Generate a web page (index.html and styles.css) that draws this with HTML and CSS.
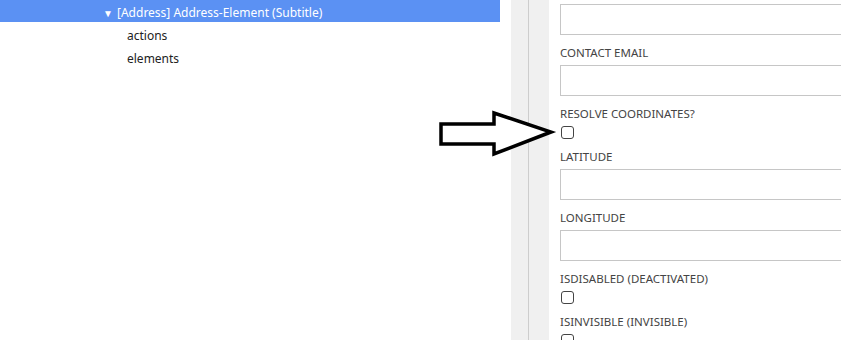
FILE: index.html
```html
<!DOCTYPE html>
<html lang="en">
<head>
  <meta charset="UTF-8">
  <title>Element Editor</title>
  <link rel="stylesheet" href="styles.css">
</head>
<body>

<div class="layout">
  <!-- Tree -->
  <div class="tree">
    <div class="tree-row selected">
      <span class="caret">&#9660;</span>
      <span>[Address] Address-Element (Subtitle)</span>
    </div>
    <div class="tree-row child">actions</div>
    <div class="tree-row child">elements</div>
  </div>

  <!-- Splitter -->
  <div class="splitter">
    <div class="splitter-left"></div>
    <div class="splitter-right"></div>
  </div>

  <!-- Properties -->
  <div class="props">
    <div class="field first">
      <input type="text" class="text-input">
    </div>
    <div class="field">
      <label>Contact Email</label>
      <input type="text" class="text-input">
    </div>
    <div class="field">
      <label>Resolve Coordinates?</label>
      <input type="checkbox" class="check">
    </div>
    <div class="field">
      <label>Latitude</label>
      <input type="text" class="text-input">
    </div>
    <div class="field">
      <label>Longitude</label>
      <input type="text" class="text-input">
    </div>
    <div class="field">
      <label>IsDisabled (Deactivated)</label>
      <input type="checkbox" class="check">
    </div>
    <div class="field">
      <label>IsInvisible (Invisible)</label>
      <input type="checkbox" class="check">
    </div>
  </div>
</div>

<!-- annotation arrow -->
<svg class="arrow" width="130" height="60" viewBox="0 0 130 60">
  <polygon points="11,24 64,24 64,13 121,32 64,54 64,44 11,44" fill="#fff" stroke="#000" stroke-width="3.5" stroke-linejoin="miter"/>
</svg>

</body>
</html>
```

FILE: styles.css
```css
/* Global Styles */
body {
  margin: 0;
  font-family: 'Noto Sans', 'Open Sans', sans-serif;
  background: #fff;
  overflow: hidden;
  height: 340px;
}

.layout {
  display: flex;
  height: 340px;
}

/* Tree */
.tree {
  width: 511px;
  flex-shrink: 0;
  margin-top: -1px;
}

.tree-row {
  height: 23px;
  box-sizing: border-box;
  padding-top: 4px;
  display: flex;
  align-items: center;
  font-size: 12px;
  color: #222;
}

.tree-row.selected {
  width: 500px;
  background: #5b91f3;
  color: #fff;
  padding-left: 103px;
}

.caret {
  font-size: 10px;
  width: 14px;
}

.tree-row.child {
  padding-left: 127px;
}

/* Splitter */
.splitter {
  display: flex;
  flex-shrink: 0;
}

.splitter-left {
  width: 17px;
  background: #f0f0f0;
  border-right: 1px solid #cdcdcd;
}

.splitter-right {
  width: 20px;
  background: #f0f0f0;
}

/* Properties */
.props {
  padding-left: 11px;
  flex: 1;
  min-width: 0;
}

.field {
  display: flex;
  flex-direction: column;
  align-items: flex-start;
  margin-bottom: 10px;
}

.field.first {
  margin-top: 4px;
}

.field label {
  font-size: 11.5px;
  line-height: 16px;
  text-transform: uppercase;
  color: #444;
  margin-bottom: 4px;
}

.text-input {
  width: 320px;
  height: 31px;
  box-sizing: border-box;
  border: 1px solid #c6c6c6;
  margin: 0;
  padding: 0 6px;
}

.check {
  appearance: none;
  width: 13px;
  height: 13px;
  margin: 0 0 0 1px;
  border: 1px solid #444;
  border-radius: 3px;
  background: #fff;
  box-sizing: border-box;
}

.arrow {
  position: absolute;
  left: 430px;
  top: 100px;
}
```
